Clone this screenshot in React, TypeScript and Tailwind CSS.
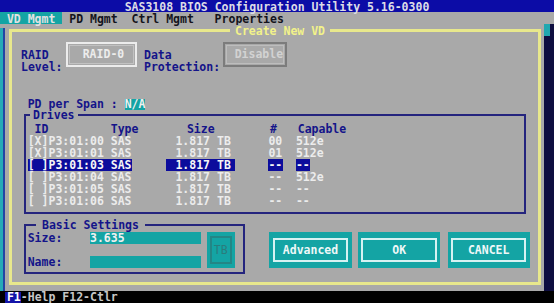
import React from "react";

type Row = { id: string; type: string; size: string; num: string; cap: string; sel?: boolean };

const rows: Row[] = [
  { id: "[X]P3:01:00", type: "SAS", size: "1.817 TB", num: "00", cap: "512e" },
  { id: "[X]P3:01:01", type: "SAS", size: "1.817 TB", num: "01", cap: "512e" },
  { id: "[ ]P3:01:03", type: "SAS", size: "1.817 TB", num: "--", cap: "--", sel: true },
  { id: "[ ]P3:01:04", type: "SAS", size: "1.817 TB", num: "--", cap: "512e" },
  { id: "[ ]P3:01:05", type: "SAS", size: "1.817 TB", num: "--", cap: "--" },
  { id: "[ ]P3:01:06", type: "SAS", size: "1.817 TB", num: "--", cap: "--" },
];

function Button({ label, w, ml }: { label: string; w: string; ml: string }) {
  return (
    <div className={`${w} ${ml} h-[36.6px] bg-[#14a4a4] px-[3.4px] pt-[6px] pb-[6.6px]`}>
      <div className="h-full border-2 border-[#d6f2f2] flex items-center justify-center text-[#eef8f8]">
        {label}
      </div>
    </div>
  );
}

export default function App() {
  const hdr = " ID" + " ".repeat(9) + "Type" + " ".repeat(7) + "Size" + " ".repeat(8) + "#" + " ".repeat(3) + "Capable";
  return (
    <div className="w-[554px] h-[303px] overflow-hidden bg-[#a9a9a9] flex flex-col font-bold text-[11.5px] leading-[12.12px] font-['DejaVu_Sans_Mono',monospace]">
      {/* title */}
      <div className="h-[12px] shrink-0 bg-[#0c0ca6] text-[#dcdce6] flex justify-center whitespace-pre leading-[12px] pt-[0.5px]">
        SAS3108 BIOS Configuration Utility 5.16-0300
      </div>
      {/* menu */}
      <div className="h-[12px] shrink-0 flex whitespace-pre leading-[12px] text-[#14141c]">
        <span className="w-[9ch] bg-[#14a4a4] text-[#e2e2e2] pt-[1px]"> VD Mgmt</span>
        <span className="ml-[1ch] pt-[1px]">PD Mgmt</span>
        <span className="ml-[2ch] pt-[1px]">Ctrl Mgmt</span>
        <span className="ml-[3ch] pt-[1px]">Properties</span>
      </div>
      {/* middle */}
      <div className="h-[267px] shrink-0 flex">
        <div className="w-[5px] mt-[4px] flex">
          <div className="w-[3px] bg-[#26aab6]" />
          <div className="w-[2px] bg-[#2444a4]" />
        </div>
        <div className="ml-[4px] mt-[5px] w-[532px] h-[256px] border-[3px] border-[#e8e88c] relative text-[#14148a]">
          <div className="absolute top-[-7px] left-[218px] px-[5px] bg-[#a9a9a9] text-[#f2f28a] leading-[12px] whitespace-pre">
            Create New VD
          </div>
          {/* RAID row */}
          <div className="flex mt-[10px] h-[25px]">
            <div className="ml-[9px] w-[44.7px] mt-[6.5px]">
              <div>RAID</div>
              <div>Level:</div>
            </div>
            <div className="w-[71.6px] h-[25px] border-2 border-[#ececec] p-[1px]">
              <div className="h-full border border-[#c2c2c2] flex items-center pl-[13px] text-[#ececec]">RAID-0</div>
            </div>
            <div className="ml-[6.7px] w-[78.7px] mt-[6.5px]">
              <div>Data</div>
              <div>Protection:</div>
            </div>
            <div className="w-[64.3px] h-[25px] border-2 border-[#7c7c7c] p-[1px]">
              <div className="h-full border border-[#bdbdbd] flex items-center pl-[8px] text-[#d2d2d2]">Disable</div>
            </div>
          </div>
          {/* PD per span */}
          <div className="mt-[32px] ml-[15.7px] flex h-[11px] leading-[11px] whitespace-pre">
            <span>PD per Span : </span>
            <span className="bg-[#14a4a4] text-[#f0f0f0]">N/A</span>
          </div>
          {/* Drives */}
          <div className="mt-[4px] ml-[12px] w-[502.3px] h-[100px] border-2 border-[#24247e] relative pt-[6.5px]">
            <div className="absolute top-[-7px] left-[4px] px-[3px] bg-[#a9a9a9] whitespace-pre">Drives</div>
            <div className="h-[12.12px] pl-[1.7px] whitespace-pre">{hdr}</div>
            {rows.map((r) => {
              const hl = r.sel ? "bg-[#0c0c9c] text-[#f6f6f6]" : "";
              return (
                <div key={r.id} className="flex h-[12.12px] pl-[1.7px] whitespace-pre text-[#ececec]">
                  <span className={`w-[15ch] ${hl}`}>{r.id + " " + r.type}</span>
                  <span className="w-[34.4px]" />
                  <span className={`w-[69.5px] pl-[9.5px] ${hl}`}>{r.size}</span>
                  <span className="w-[32.5px]" />
                  <span className={`w-[15px] pl-[0.5px] ${hl}`}>{r.num}</span>
                  <span className="w-[13px]" />
                  <span className={r.sel ? `w-[14.5px] ${hl}` : ""}>{r.cap}</span>
                </div>
              );
            })}
          </div>
          {/* bottom */}
          <div className="mt-[10px] flex items-start">
            <div className="ml-[12px] w-[220.5px] h-[50px] border-2 border-[#24247e] relative">
              <div className="absolute top-[-7px] left-[10px] px-[6px] bg-[#a9a9a9] whitespace-pre">Basic Settings</div>
              <div className="flex pt-[5.7px]">
                <div className="flex flex-col pl-[1.7px]">
                  <div className="flex h-[12.12px]">
                    <span className="w-[9ch]">Size:</span>
                    <span className="w-[16ch] bg-[#14a4a4] text-[#f0f0f0]">3.635</span>
                  </div>
                  <div className="flex h-[12.12px] mt-[12.5px]">
                    <span className="w-[9ch]">Name:</span>
                    <span className="w-[16ch] bg-[#14a4a4]" />
                  </div>
                </div>
                <div className="ml-[5.9px] w-[28.3px] h-[36.6px] bg-[#14a4a4] px-[3px] py-[4px]">
                  <div className="h-full border-2 border-[#238686] flex items-center justify-center text-[#2a7c7c] font-normal">TB</div>
                </div>
              </div>
            </div>
            <div className="mt-[7.7px] flex">
              <Button label="Advanced" w="w-[82.4px]" ml="ml-[24.8px]" />
              <Button label="OK" w="w-[82.3px]" ml="ml-[6.3px]" />
              <Button label="CANCEL" w="w-[82px]" ml="ml-[7.4px]" />
            </div>
          </div>
        </div>
        <div className="ml-auto w-[10px] flex flex-col">
          <div className="h-[12px] flex">
            <div className="w-[6px] bg-[#20a8b0]" />
            <div className="flex-1 bg-[#0e0e40]" />
          </div>
          <div className="flex-1 bg-[#0e0e40]" />
        </div>
      </div>
      {/* status */}
      <div className="h-[12px] shrink-0 bg-black flex whitespace-pre leading-[11px] pt-[1px]">
        <span className="ml-[5px] pl-[1.9px] w-[15.8px] bg-[#1414a8] text-white">F1</span>
        <span className="text-[#c6c6c6]">-Help F12-Ctlr</span>
      </div>
    </div>
  );
}
